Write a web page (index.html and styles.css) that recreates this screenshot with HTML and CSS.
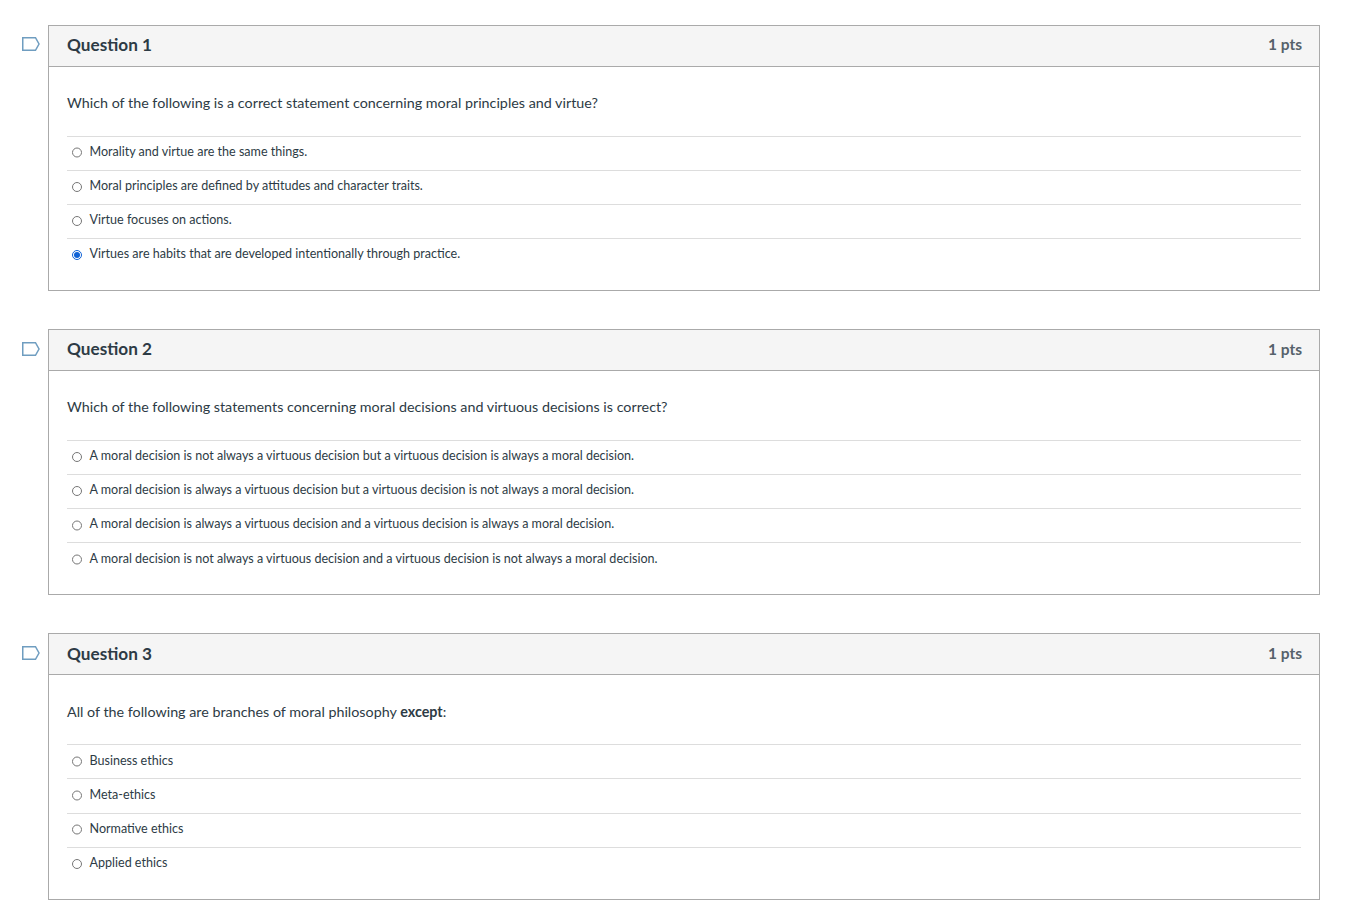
FILE: index.html
```html
<!DOCTYPE html>
<html lang="en">
<head>
<meta charset="utf-8">
<title>Quiz</title>
<link rel="stylesheet" href="styles.css">
</head>
<body>
<main class="quiz">
  <section class="question">
    <svg class="flag" viewBox="0 0 18 14" width="18" height="14" aria-hidden="true"><path d="M0.75 0.75H13.5L17 7L13.5 13.25H0.75Z"/></svg>
    <div class="card">
      <header class="card-head"><h2>Question 1</h2><span class="pts">1 pts</span></header>
      <div class="card-body">
        <p class="prompt">Which of the following is a correct statement concerning moral principles and virtue?</p>
        <ul class="answers">
          <li><label><input type="radio" name="q1"><span>Morality and virtue are the same things.</span></label></li>
          <li><label><input type="radio" name="q1"><span>Moral principles are defined by attitudes and character traits.</span></label></li>
          <li><label><input type="radio" name="q1"><span>Virtue focuses on actions.</span></label></li>
          <li><label><input type="radio" name="q1" checked><span>Virtues are habits that are developed intentionally through practice.</span></label></li>
        </ul>
      </div>
    </div>
  </section>
  <section class="question">
    <svg class="flag" viewBox="0 0 18 14" width="18" height="14" aria-hidden="true"><path d="M0.75 0.75H13.5L17 7L13.5 13.25H0.75Z"/></svg>
    <div class="card">
      <header class="card-head"><h2>Question 2</h2><span class="pts">1 pts</span></header>
      <div class="card-body">
        <p class="prompt">Which of the following statements concerning moral decisions and virtuous decisions is correct?</p>
        <ul class="answers">
          <li><label><input type="radio" name="q2"><span>A moral decision is not always a virtuous decision but a virtuous decision is always a moral decision.</span></label></li>
          <li><label><input type="radio" name="q2"><span>A moral decision is always a virtuous decision but a virtuous decision is not always a moral decision.</span></label></li>
          <li><label><input type="radio" name="q2"><span>A moral decision is always a virtuous decision and a virtuous decision is always a moral decision.</span></label></li>
          <li><label><input type="radio" name="q2"><span>A moral decision is not always a virtuous decision and a virtuous decision is not always a moral decision.</span></label></li>
        </ul>
      </div>
    </div>
  </section>
  <section class="question">
    <svg class="flag" viewBox="0 0 18 14" width="18" height="14" aria-hidden="true"><path d="M0.75 0.75H13.5L17 7L13.5 13.25H0.75Z"/></svg>
    <div class="card">
      <header class="card-head"><h2>Question 3</h2><span class="pts">1 pts</span></header>
      <div class="card-body">
        <p class="prompt">All of the following are branches of moral philosophy <strong>except</strong>:</p>
        <ul class="answers">
          <li><label><input type="radio" name="q3"><span>Business ethics</span></label></li>
          <li><label><input type="radio" name="q3"><span>Meta-ethics</span></label></li>
          <li><label><input type="radio" name="q3"><span>Normative ethics</span></label></li>
          <li><label><input type="radio" name="q3"><span>Applied ethics</span></label></li>
        </ul>
      </div>
    </div>
  </section>
</main>
</body>
</html>
```
FILE: styles.css
```css
* { box-sizing: border-box; }
html, body { margin: 0; padding: 0; background: #fff; }
body {
  font-family: Lato, "Open Sans", sans-serif;
  color: #2d3b45;
  overflow: hidden;
}
.quiz {
  display: flex;
  flex-direction: column;
  gap: 38px;
  padding: 24.6px 25px 0 22px;
}
.question {
  display: flex;
  align-items: flex-start;
  gap: 8px;
}
.flag {
  flex: none;
  margin-top: 12.7px;
}
.flag path {
  fill: #fff;
  stroke: #6f9dc0;
  stroke-width: 1.5;
}
.card {
  flex: 1;
  border: 1px solid #aaa;
  height: 266.35px;
}
.card-head {
  display: flex;
  justify-content: space-between;
  align-items: center;
  height: 41px;
  padding: 0 17px 0 18px;
  background: #f5f5f5;
  border-bottom: 1px solid #aaa;
}
.card-head h2 {
  margin: 0 0 2px;
  font-size: 17.2px;
  font-weight: 700;
  line-height: 1;
}
.pts {
  margin-bottom: 2.5px;
  font-size: 15.5px;
  font-weight: 700;
  color: #56626b;
}
.card-body { padding: 0 18px; }
.prompt {
  margin: 0;
  padding-top: 26.4px;
  height: 69px;
  font-size: 14.32px;
  line-height: 20px;
}
.answers {
  list-style: none;
  margin: 0;
  padding: 0;
}
.answers li {
  height: 34.15px;
  border-top: 1px solid #ddd;
}
.answers label {
  display: flex;
  align-items: center;
  height: 100%;
  padding-left: 4.5px;
  font-size: 12.56px;
}
.answers input {
  width: 10.5px;
  height: 10.5px;
  margin: 0 7.5px 1px 0;
  flex: none;
  accent-color: #0f62d6;
}
.answers span { position: relative; top: -1.8px; }
```
